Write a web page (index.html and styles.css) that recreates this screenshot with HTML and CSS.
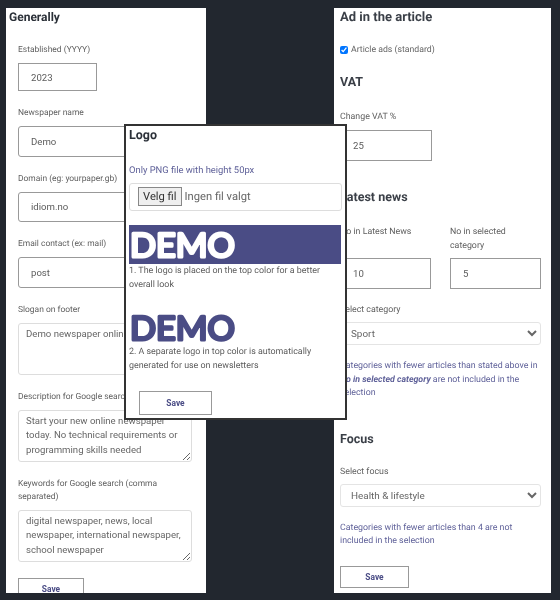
FILE: index.html
```html
<!DOCTYPE html>
<html lang="en">
<head>
  <meta charset="UTF-8" />
  <title>Settings</title>
  <link rel="stylesheet" href="styles.css">
</head>
<body>

  <div class="panel panel-left">
    <h2>Generally</h2>
    <div class="fields">
      <div class="field">
        <label>Established (YYYY)</label>
        <input class="input year" type="text" value="2023" />
      </div>
      <div class="field">
        <label>Newspaper name</label>
        <input class="input round" type="text" value="Demo" />
      </div>
      <div class="field">
        <label>Domain (eg: yourpaper.gb)</label>
        <input class="input round" type="text" value="idiom.no" />
      </div>
      <div class="field">
        <label>Email contact (ex: mail)</label>
        <input class="input round" type="text" value="post" />
      </div>
      <div class="field">
        <label>Slogan on footer</label>
        <textarea class="area">Demo newspaper online</textarea>
      </div>
      <div class="field">
        <label>Description for Google search</label>
        <textarea class="area">Start your new online newspaper today. No technical requirements or programming skills needed</textarea>
      </div>
      <div class="field">
        <label>Keywords for Google search (comma separated)</label>
        <textarea class="area">digital newspaper, news, local newspaper, international newspaper, school newspaper</textarea>
      </div>
      <button class="save save-left">Save</button>
    </div>
  </div>

  <div class="panel panel-right">
    <h2 class="first">Ad in the article</h2>
    <div class="check-row">
      <input type="checkbox" checked />
      <span>Article ads (standard)</span>
    </div>
    <h2 class="sub vat">VAT</h2>
    <label>Change VAT %</label>
    <input class="input vat-input" type="text" value="25" />
    <h2 class="sub latest">Latest news</h2>
    <div class="two-col">
      <div class="col">
        <label>No in Latest News</label>
        <input class="input" type="text" value="10" />
      </div>
      <div class="col">
        <label>No in selected category</label>
        <input class="input" type="text" value="5" />
      </div>
    </div>
    <label class="select-label">Select category</label>
    <select class="select">
      <option>Sport</option>
    </select>
    <p class="note note-cat">Categories with fewer articles than stated above in <b><i>No in selected category</i></b> are not included in the selection</p>
    <h2 class="sub focus">Focus</h2>
    <label>Select focus</label>
    <select class="select">
      <option>Health &amp; lifestyle</option>
    </select>
    <p class="note note-focus">Categories with fewer articles than 4 are not included in the selection</p>
    <button class="save">Save</button>
  </div>

  <div class="popup">
    <h2>Logo</h2>
    <p class="note only">Only PNG file with height 50px</p>
    <div class="file-box">
      <span class="file-btn">Velg fil</span>
      <span>Ingen fil valgt</span>
    </div>
    <svg class="logo logo-white" width="212" height="39" viewBox="0 0 212 39">
      <text x="1" y="31.5" textLength="105" lengthAdjust="spacingAndGlyphs">DEMO</text>
    </svg>
    <p class="logo-text">1. The logo is placed on the top color for a better overall look</p>
    <svg class="logo logo-blue" width="212" height="29" viewBox="0 0 212 29">
      <text x="1" y="26.5" textLength="105" lengthAdjust="spacingAndGlyphs">DEMO</text>
    </svg>
    <p class="logo-text">2. A separate logo in top color is automatically generated for use on newsletters</p>
    <button class="save save-popup">Save</button>
  </div>

</body>
</html>
```

FILE: styles.css
```css
body {
  margin: 0;
  padding: 8px 9px 7px 6px;
  height: 600px;
  box-sizing: border-box;
  display: flex;
  justify-content: space-between;
  background: #22272f;
  font-family: 'Roboto', sans-serif;
  text-rendering: geometricPrecision;
  color: #555;
  overflow: hidden;
}
.panel {
  background: #fff;
  height: 585px;
  overflow: hidden;
  box-sizing: border-box;
  filter: blur(0.3px);
}
.panel-left {
  width: 200px;
  padding: 0 14px 0 12px;
}
.panel-right {
  width: 217px;
  padding: 0 10px 0 6px;
}
.panel-left h2 {
  margin-left: -9px;
}
h2 {
  margin: 0;
  padding-top: 2px;
  font-size: 12px;
  line-height: 14px;
  font-weight: 700;
  color: #2b3038;
}
h2.first {
  padding-top: 3px;
  font-size: 13px;
  color: #3a3f47;
}
label {
  display: block;
  font-size: 8.8px;
  line-height: 13px;
  color: #606060;
}
.fields {
  padding-top: 20px;
}
.field {
  margin-bottom: 16px;
}
.field label {
  margin-bottom: 6px;
  font-size: 8.45px;
}
.input {
  display: block;
  width: 100%;
  height: 29px;
  border: 1px solid #999;
  border-radius: 0;
  box-sizing: border-box;
  margin: 0;
  padding: 0 0 0 12px;
  font-family: 'Roboto', sans-serif;
  font-size: 9.6px;
  color: #5c5c5c;
}
.year {
  width: 79px;
  height: 28px;
}
.round {
  height: 30.5px;
  border-radius: 3px;
}
.area {
  display: block;
  width: 100%;
  height: 52px;
  margin: 0;
  border: 1px solid #ddd;
  border-radius: 3px;
  box-sizing: border-box;
  padding: 3px 7px;
  font-family: 'Roboto', sans-serif;
  font-size: 9.6px;
  line-height: 14.5px;
  color: #666;
}
.save {
  display: block;
  width: 69px;
  height: 22px;
  padding: 0;
  background: #fff;
  border: 1px solid #999;
  font-family: 'Roboto', sans-serif;
  font-size: 8.4px;
  font-weight: 700;
  color: #4a4c85;
}
.save-left {
  width: 66px;
  margin-top: 1px;
}
.check-row {
  display: flex;
  align-items: center;
  gap: 3px;
  margin-top: 20px;
  font-size: 8.7px;
  color: #666;
}
.check-row input {
  width: 8px;
  height: 8px;
  margin: 0;
}
.sub {
  font-size: 12.5px;
  color: #3a3f47;
}
.vat {
  margin-top: 19px;
  margin-bottom: 21px;
}
.vat-input {
  width: 92px;
  height: 31px;
  margin-top: 6px;
}
.latest {
  margin-top: 28px;
  margin-bottom: 20px;
}
.two-col {
  display: flex;
  gap: 19px;
}
.col {
  flex: 1;
  display: flex;
  flex-direction: column;
  justify-content: space-between;
}
.col label {
  padding-right: 10px;
  line-height: 14px;
}
.col .input {
  height: 31px;
  margin-top: 5px;
}
.select-label {
  margin-top: 15px;
}
.select {
  display: block;
  width: 100%;
  height: 23px;
  margin: 5px 0 0;
  padding: 0 0 0 6px;
  background: #fff;
  border: 1px solid #e4e4e4;
  border-radius: 3px;
  box-sizing: border-box;
  font-family: 'Roboto', sans-serif;
  font-size: 9.9px;
  color: #666;
}
.note {
  margin: 0;
  font-size: 8.8px;
  line-height: 13.5px;
  color: #5f6199;
}
.note-cat {
  margin-top: 15px;
}
.focus {
  margin-top: 30px;
  margin-bottom: 19px;
}
.note-focus {
  margin-top: 15px;
  margin-bottom: 17px;
}
.popup {
  position: absolute;
  left: 124px;
  top: 124px;
  width: 223px;
  height: 296px;
  box-sizing: border-box;
  padding: 0 3px;
  background: #fff;
  border: 2px solid #333;
  filter: blur(0.3px);
}
.popup h2 {
  font-size: 12.5px;
  padding-top: 3px;
}
.only {
  margin-top: 21px;
  font-size: 9.4px;
}
.file-box {
  display: flex;
  align-items: center;
  gap: 3px;
  height: 28px;
  margin-top: 5px;
  padding-left: 8px;
  border: 1px solid #ddd;
  border-radius: 3px;
  box-sizing: border-box;
  font-size: 11.2px;
  color: #666;
}
.file-btn {
  padding: 2px 4px;
  background: #efefef;
  border: 1px solid #888;
  color: #333;
}
.logo {
  display: block;
  font-family: 'Lato', sans-serif;
  font-weight: 400;
  font-size: 33px;
  stroke-width: 3;
  stroke-linejoin: round;
}
.logo-white {
  margin-top: 14px;
  background: #4a4c85;
  fill: #fff;
  stroke: #fff;
}
.logo-blue {
  margin-top: 20px;
  margin-bottom: 3px;
  fill: #4a4c85;
  stroke: #4a4c85;
}
.logo-text {
  margin: 0;
  font-size: 8.9px;
  line-height: 14.5px;
  color: #5c5c5c;
}
.save-popup {
  width: 73px;
  height: 24px;
  margin: 17px 0 0 10px;
}
```
